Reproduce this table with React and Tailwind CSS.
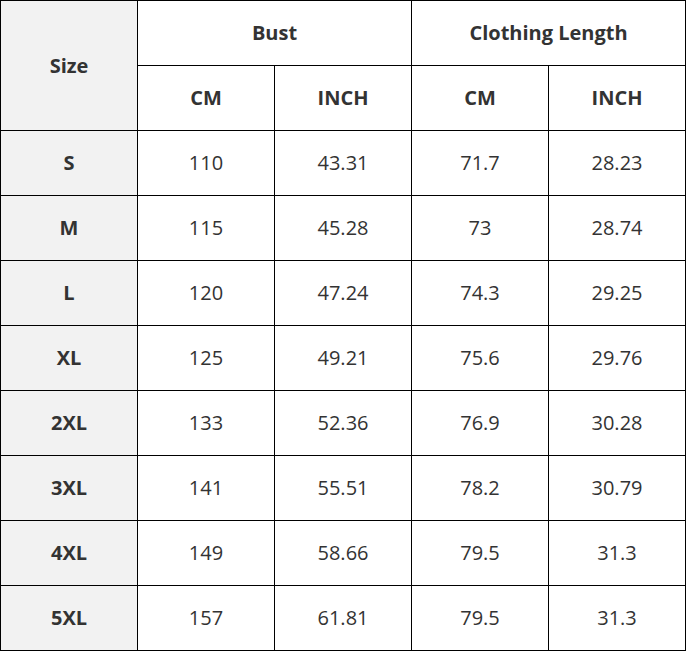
import { Fragment } from 'react';

const ROWS = [
  ['S', '110', '43.31', '71.7', '28.23'],
  ['M', '115', '45.28', '73', '28.74'],
  ['L', '120', '47.24', '74.3', '29.25'],
  ['XL', '125', '49.21', '75.6', '29.76'],
  ['2XL', '133', '52.36', '76.9', '30.28'],
  ['3XL', '141', '55.51', '78.2', '30.79'],
  ['4XL', '149', '58.66', '79.5', '31.3'],
  ['5XL', '157', '61.81', '79.5', '31.3'],
];

const cell = 'flex items-center justify-center';

export default function App() {
  return (
    <div
      className="w-[686px] h-[651px] bg-black p-px grid gap-px grid-cols-[repeat(5,136px)] grid-rows-[repeat(10,64px)] text-[20px] text-[#333]"
      style={{ fontFamily: '"Open Sans", "Noto Sans", sans-serif' }}
    >
      <div className={`${cell} row-span-2 bg-[#f2f2f2] font-bold`}>Size</div>
      <div className={`${cell} col-span-2 bg-white font-bold text-[20px]`}>Bust</div>
      <div className={`${cell} col-span-2 bg-white font-bold text-[20px]`}>Clothing Length</div>
      <div className={`${cell} bg-white font-bold`}>CM</div>
      <div className={`${cell} bg-white font-bold`}>INCH</div>
      <div className={`${cell} bg-white font-bold`}>CM</div>
      <div className={`${cell} bg-white font-bold`}>INCH</div>
      {ROWS.map((r) => (
        <Fragment key={r[0]}>
          <div className={`${cell} bg-[#f2f2f2] font-bold`}>{r[0]}</div>
          {r.slice(1).map((v, i) => (
            <div key={i} className={`${cell} bg-white`}>{v}</div>
          ))}
        </Fragment>
      ))}
    </div>
  );
}
